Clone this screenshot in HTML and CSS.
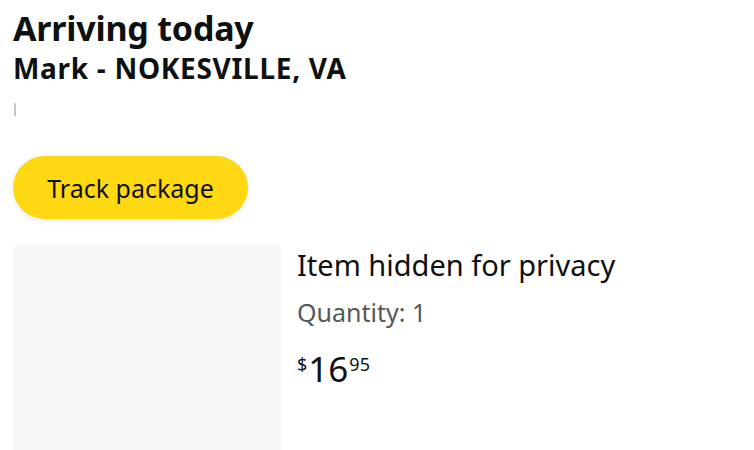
FILE: index.html
```html
<!DOCTYPE html>
<html>
<head>
<meta charset="utf-8">
<link rel="stylesheet" href="styles.css">
</head>
<body>
<div class="page">
  <h1 class="title">Arriving today</h1>
  <div class="address">Mark - NOKESVILLE, VA</div>
  <div class="status"><span class="tick"></span></div>
  <button class="track">Track package</button>
  <div class="item">
    <div class="thumb"></div>
    <div class="info">
      <div class="name">Item hidden for privacy</div>
      <div class="qty">Quantity: 1</div>
      <div class="price"><span class="sym">$</span><span class="whole">16</span><span class="frac">95</span></div>
    </div>
  </div>
</div>
</body>
</html>
```
FILE: styles.css
```css
html, body { margin: 0; padding: 0; background: #fff; }
body { font-family: "Noto Sans", "Open Sans", sans-serif; color: #0f1111; }
.page { padding: 8px 13px 0; overflow: hidden; height: 442px; }
.title { margin: 0; font-size: 34px; font-weight: 700; line-height: 40px; letter-spacing: -0.2px; }
.address { font-size: 28px; font-weight: 700; line-height: 34px; margin-top: 3px; letter-spacing: 0.7px; }
.status { height: 49px; display: flex; align-items: center; }
.tick { display: block; width: 2px; height: 13px; background: #c4c4c4; border-radius: 1px; margin-left: 1px; }
.track { display: block; margin-top: 22px; height: 63px; width: 235px; border: none; border-radius: 32px; background: #ffd814; font-family: inherit; font-size: 25px; color: #0f1111; box-shadow: 0 2px 5px rgba(213,217,217,0.5); padding: 0; }
.item { display: flex; gap: 16px; margin-top: 25px; }
.thumb { width: 268px; height: 240px; background: #f7f7f7; border-radius: 8px; flex: none; }
.info { padding-top: 3px; }
.name { font-size: 29px; line-height: 36px; }
.qty { font-size: 25px; color: #565959; line-height: 30px; margin-top: 14px; }
.price { margin-top: 24px; display: flex; align-items: flex-start; line-height: 1; }
.sym { font-size: 18px; margin-top: 4px; margin-right: 1px; }
.whole { font-size: 35px; }
.frac { font-size: 18px; margin-top: 4px; margin-left: 1px; }
```
